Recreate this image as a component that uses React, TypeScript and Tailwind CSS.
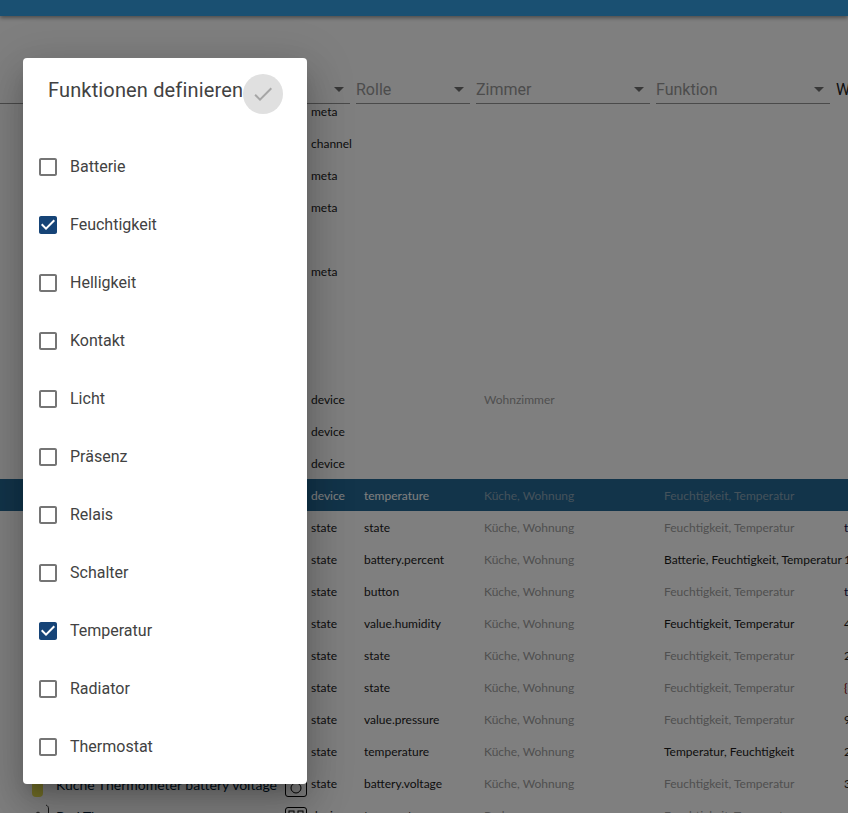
import React from "react";

const functions = [
  { name: "Batterie", checked: false },
  { name: "Feuchtigkeit", checked: true },
  { name: "Helligkeit", checked: false },
  { name: "Kontakt", checked: false },
  { name: "Licht", checked: false },
  { name: "Präsenz", checked: false },
  { name: "Relais", checked: false },
  { name: "Schalter", checked: false },
  { name: "Temperatur", checked: true },
  { name: "Radiator", checked: false },
  { name: "Thermostat", checked: false },
];

type Row = { type?: string; role?: string; room?: string; func?: string; own?: boolean; value?: string; valueClass?: string; selected?: boolean };

const rows: Row[] = [
  { type: "meta" },
  { type: "channel" },
  { type: "meta" },
  { type: "meta" },
  {},
  { type: "meta" },
  {},
  {},
  {},
  { type: "device", room: "Wohnzimmer" },
  { type: "device" },
  { type: "device" },
  { type: "device", role: "temperature", room: "Küche, Wohnung", func: "Feuchtigkeit, Temperatur", selected: true },
  { type: "state", role: "state", room: "Küche, Wohnung", func: "Feuchtigkeit, Temperatur", value: "true", valueClass: "text-[#10104a]" },
  { type: "state", role: "battery.percent", room: "Küche, Wohnung", func: "Batterie, Feuchtigkeit, Temperatur", own: true, value: "100" },
  { type: "state", role: "button", room: "Küche, Wohnung", func: "Feuchtigkeit, Temperatur", value: "true", valueClass: "text-[#10104a]" },
  { type: "state", role: "value.humidity", room: "Küche, Wohnung", func: "Feuchtigkeit, Temperatur", own: true, value: "48" },
  { type: "state", role: "state", room: "Küche, Wohnung", func: "Feuchtigkeit, Temperatur", value: "21" },
  { type: "state", role: "state", room: "Küche, Wohnung", func: "Feuchtigkeit, Temperatur", value: "{", valueClass: "text-[#800000]" },
  { type: "state", role: "value.pressure", room: "Küche, Wohnung", func: "Feuchtigkeit, Temperatur", value: "98" },
  { type: "state", role: "temperature", room: "Küche, Wohnung", func: "Temperatur, Feuchtigkeit", own: true, value: "21" },
  { type: "state", role: "battery.voltage", room: "Küche, Wohnung", func: "Feuchtigkeit, Temperatur", value: "3" },
  { type: "device", role: "temperature", room: "Bad", func: "Feuchtigkeit, Temperatur" },
];

function FilterSelect({ label, className }: { label: string; className: string }) {
  return (
    <div className={`flex h-[30px] shrink-0 items-center justify-between border-b border-[#949494] pr-1.5 pt-0.5 text-[16px] text-[#999] ${className}`}>
      <span>{label}</span>
      <svg width="10" height="5" viewBox="0 0 10 5" className="fill-[#707070]">
        <path d="M0 0h10L5 5z" />
      </svg>
    </div>
  );
}

function FunctionCheckbox({ name, checked }: { name: string; checked: boolean }) {
  return (
    <label className="flex h-[58px] items-center pt-0.5">
      {checked ? (
        <svg width="24" height="24" viewBox="0 0 24 24" className="ml-3 mr-2.5 fill-[#164477]">
          <path d="M19 3H5c-1.11 0-2 .9-2 2v14c0 1.1.89 2 2 2h14c1.11 0 2-.9 2-2V5c0-1.1-.89-2-2-2zm-9 14l-5-5 1.41-1.41L10 14.17l7.59-7.59L19 8l-9 9z" />
        </svg>
      ) : (
        <svg width="24" height="24" viewBox="0 0 24 24" className="ml-3 mr-2.5 fill-[#757575]">
          <path d="M19 5v14H5V5h14m0-2H5c-1.1 0-2 .9-2 2v14c0 1.1.9 2 2 2h14c1.1 0 2-.9 2-2V5c0-1.1-.9-2-2-2z" />
        </svg>
      )}
      <span className="text-[16px] text-[#424242]">{name}</span>
    </label>
  );
}

export default function App() {
  return (
    <div className="relative h-[813px] w-[848px] overflow-hidden bg-white font-['Roboto',sans-serif]">
      <div className="h-4 bg-[#34a0e4] shadow-[0_2px_4px_rgba(0,0,0,0.4)]" />

      <div className="mt-[58px] flex h-[31px] gap-1.5 whitespace-nowrap">
        <FilterSelect label="" className="w-[350px]" />
        <FilterSelect label="Rolle" className="w-[114px]" />
        <FilterSelect label="Zimmer" className="w-[174px]" />
        <FilterSelect label="Funktion" className="w-[174px]" />
        <span className="pt-px text-[16px] leading-[30px] text-[#222]">Wert</span>
      </div>

      <div className="mt-[-10px] font-['Lato',sans-serif] text-[12px] text-[#1a1a1a]">
        {rows.map((row, i) => (
          <div key={i} className={`flex h-8 items-center whitespace-nowrap pt-0.5 ${row.selected ? "bg-[#246894] text-white" : ""}`}>
            <div className="w-[311px] shrink-0" />
            <div className="w-[53px] shrink-0">{row.type}</div>
            <div className="w-[120px] shrink-0">{row.role}</div>
            <div className={`w-[180px] shrink-0 ${row.selected ? "text-[#8aa4b6]" : "text-[#a0a0a0]"}`}>{row.room}</div>
            <div className={`w-[180px] shrink-0 ${row.own ? "" : row.selected ? "text-[#8aa4b6]" : "text-[#a0a0a0]"}`}>{row.func}</div>
            <div className={row.valueClass}>{row.value}</div>
          </div>
        ))}
      </div>

      {/* fragments of the list names that show below the dialog */}
      <div className="absolute left-[32px] top-[776px] h-[21px] w-[11px] rounded-sm bg-[#e8e050]" />
      <div className="absolute left-[56px] top-[774px] font-['Lato',sans-serif] text-[14px] text-[#001a33]">
        Küche Thermometer battery voltage
      </div>
      <div className="absolute left-[56px] top-[806px] font-['Lato',sans-serif] text-[14px] text-[#001a33]">
        Bad Thermometer
      </div>
      <svg width="24" height="52" viewBox="0 0 24 52" className="absolute left-[284px] top-[775px] fill-none stroke-black">
        <rect x="1.5" y="1.5" width="21" height="20" rx="2.5" />
        <circle cx="12" cy="13" r="5" />
        <rect x="1.5" y="32.5" width="21" height="18" rx="2.5" />
        <rect x="5" y="36" width="5" height="8" />
        <rect x="14" y="36" width="5" height="8" />
      </svg>
      <svg width="20" height="12" viewBox="0 0 20 12" className="absolute left-[32px] top-[803px] fill-none stroke-[#333]">
        <path d="M14 2c2 1 2.500 2 2.500 4v6" />
        <path d="M3 11l3-2 3 2" />
      </svg>

      {/* backdrop */}
      <div className="absolute inset-0 bg-black/50" />

      {/* dialog */}
      <div className="absolute left-[23px] top-[58px] h-[726px] w-[284px] rounded bg-white shadow-[0_11px_15px_-7px_rgba(0,0,0,0.2),0_24px_38px_3px_rgba(0,0,0,0.14),0_9px_46px_8px_rgba(0,0,0,0.12)]">
        <div className="relative h-[79px] pl-[25px] pt-[19px] text-[20px] leading-[27px] tracking-[0.15px] text-[#424242]">
          Funktionen definieren
          <div className="absolute left-[220px] top-4 flex h-10 w-10 items-center justify-center rounded-full bg-[#e0e0e0]">
            <svg width="24" height="24" viewBox="0 0 24 24" className="fill-[#a6a6a6]">
              <path d="M9 16.17L4.83 12l-1.42 1.41L9 19 21 7l-1.41-1.41z" />
            </svg>
          </div>
        </div>
        <div className="px-px">
          {functions.map((f) => (
            <FunctionCheckbox key={f.name} name={f.name} checked={f.checked} />
          ))}
        </div>
      </div>
    </div>
  );
}
